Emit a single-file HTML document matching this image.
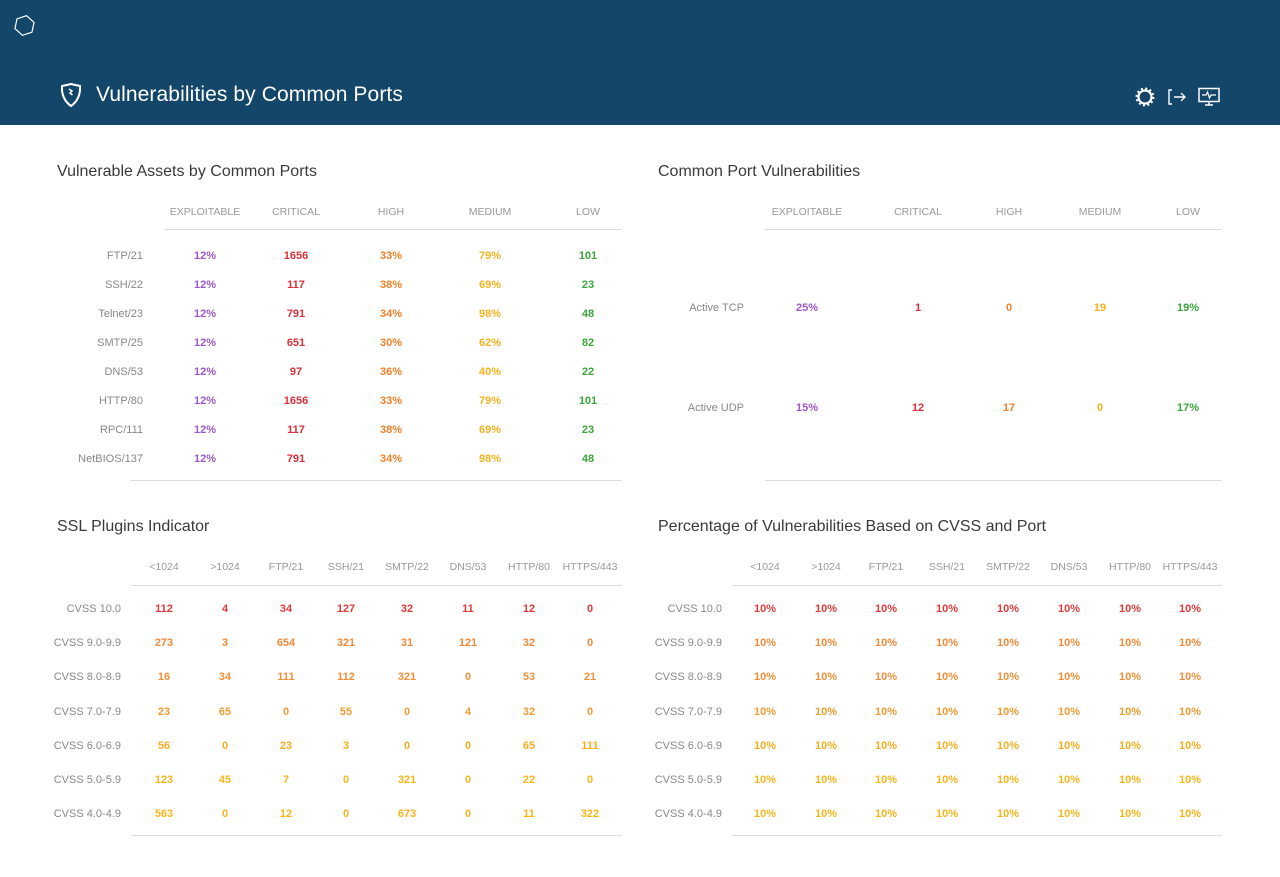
<!DOCTYPE html>
<html><head><meta charset="utf-8"><style>
*{margin:0;padding:0;box-sizing:border-box}
body{width:1280px;height:877px;background:#fff;font-family:"Liberation Sans",sans-serif;position:relative;overflow:hidden}
.hdr{position:absolute;left:0;top:0;width:1280px;height:125px;background:#134669}
.title{position:absolute;left:96px;top:83px;color:#fff;font-size:21px;letter-spacing:0.1px}
.h2{position:absolute;font-size:16px;color:#3a3a3a;font-weight:normal}
.r{position:absolute;left:0;width:1280px;height:14px;font-size:11px;line-height:14px;font-weight:bold}
.r span{position:absolute;text-align:center}
.r span:first-child{left:0;text-align:right;color:#888;font-weight:normal}
.hd span{color:#999;font-weight:normal;font-size:10.5px}
.line{position:absolute;height:1px;background:#ddd}
.t1 span{width:80px}.t1 span:first-child{width:143px}
.t1 span:nth-child(2){left:165px}.t1 span:nth-child(3){left:256px}.t1 span:nth-child(4){left:351px}.t1 span:nth-child(5){left:450px}.t1 span:nth-child(6){left:548px}
.t2 span{width:80px}.t2 span:first-child{width:744px}
.t2 span:nth-child(2){left:767px}.t2 span:nth-child(3){left:878px}.t2 span:nth-child(4){left:969px}.t2 span:nth-child(5){left:1060px}.t2 span:nth-child(6){left:1148px}
.t3 span{width:60px}.t3 span:first-child{width:121px}
.t3 span:nth-child(2){left:134px}.t3 span:nth-child(3){left:195px}.t3 span:nth-child(4){left:256px}.t3 span:nth-child(5){left:316px}.t3 span:nth-child(6){left:377px}.t3 span:nth-child(7){left:438px}.t3 span:nth-child(8){left:499px}.t3 span:nth-child(9){left:560px}
.t4 span{width:60px}.t4 span:first-child{width:722px}
.t4 span:nth-child(2){left:735px}.t4 span:nth-child(3){left:796px}.t4 span:nth-child(4){left:856px}.t4 span:nth-child(5){left:917px}.t4 span:nth-child(6){left:978px}.t4 span:nth-child(7){left:1039px}.t4 span:nth-child(8){left:1100px}.t4 span:nth-child(9){left:1160px}
.c5 span:nth-child(2){color:#9b59c6}.c5 span:nth-child(3){color:#d9303a}.c5 span:nth-child(4){color:#f0812a}.c5 span:nth-child(5){color:#f7b21e}.c5 span:nth-child(6){color:#3aa63a}
.k1{color:#df3a3a}.k2{color:#ef8a3a}.k3{color:#f0913a}.k4{color:#f39b32}.k5{color:#f8ae22}.k6{color:#f9b51c}
</style></head><body>
<div class="hdr">
<svg style="position:absolute;left:13px;top:14px" width="23" height="23" viewBox="0 0 23 23"><polygon points="11.5,1.5 20.2,6.5 20.2,16.5 11.5,21.5 2.8,16.5 2.8,6.5" transform="rotate(12 11.5 11.5)" fill="none" stroke="#fff" stroke-width="1.2"/></svg>
<svg style="position:absolute;left:59px;top:82px" width="24" height="26" viewBox="0 0 24 26"><path d="M12 2 C8 3 5 3.5 3 4 C2.5 12 5 19 12 24 C19 19 21.5 12 21 4 C19 3.5 16 3 12 2Z" fill="none" stroke="#fff" stroke-width="2"/><path d="M10 7 L13 9 L11 11 L13.5 13" fill="none" stroke="#fff" stroke-width="1.5"/></svg>
<div class="title">Vulnerabilities by Common Ports</div>
<svg style="position:absolute;left:1135px;top:87px" width="20" height="20" viewBox="0 0 20 20"><circle cx="10" cy="10" r="6.5" fill="none" stroke="#fff" stroke-width="2.2"/><circle cx="10" cy="10" r="8.5" fill="none" stroke="#fff" stroke-width="2" stroke-dasharray="2 2.45"/></svg>
<svg style="position:absolute;left:1167px;top:88px" width="20" height="18" viewBox="0 0 20 18"><path d="M5 2H2V16H5" fill="none" stroke="#fff" stroke-width="1.4"/><path d="M7 9H18M14 5L18 9L14 13" fill="none" stroke="#fff" stroke-width="1.4"/></svg>
<svg style="position:absolute;left:1197px;top:87px" width="24" height="20" viewBox="0 0 24 20"><rect x="2" y="1.5" width="20" height="13" fill="none" stroke="#fff" stroke-width="1.5"/><path d="M5 8H9L10.5 5L12.5 11L14 8H19" fill="none" stroke="#fff" stroke-width="1.2"/><path d="M8 18H16M12 14.5V18" stroke="#fff" stroke-width="1.5"/></svg>
</div>

<div class="h2" style="left:57px;top:163px">Vulnerable Assets by Common Ports</div>
<div class="h2" style="left:658px;top:163px">Common Port Vulnerabilities</div>
<div class="h2" style="left:57px;top:518px">SSL Plugins Indicator</div>
<div class="h2" style="left:658px;top:518px">Percentage of Vulnerabilities Based on CVSS and Port</div>

<div class="r t1 hd" style="top:205px"><span></span><span>EXPLOITABLE</span><span>CRITICAL</span><span>HIGH</span><span>MEDIUM</span><span>LOW</span></div>
<div class="line" style="left:165px;width:457px;top:229px"></div>
<div class="r t1 c5" style="top:249px"><span>FTP/21</span><span>12%</span><span>1656</span><span>33%</span><span>79%</span><span>101</span></div>
<div class="r t1 c5" style="top:278px"><span>SSH/22</span><span>12%</span><span>117</span><span>38%</span><span>69%</span><span>23</span></div>
<div class="r t1 c5" style="top:307px"><span>Telnet/23</span><span>12%</span><span>791</span><span>34%</span><span>98%</span><span>48</span></div>
<div class="r t1 c5" style="top:336px"><span>SMTP/25</span><span>12%</span><span>651</span><span>30%</span><span>62%</span><span>82</span></div>
<div class="r t1 c5" style="top:365px"><span>DNS/53</span><span>12%</span><span>97</span><span>36%</span><span>40%</span><span>22</span></div>
<div class="r t1 c5" style="top:394px"><span>HTTP/80</span><span>12%</span><span>1656</span><span>33%</span><span>79%</span><span>101</span></div>
<div class="r t1 c5" style="top:423px"><span>RPC/111</span><span>12%</span><span>117</span><span>38%</span><span>69%</span><span>23</span></div>
<div class="r t1 c5" style="top:452px"><span>NetBIOS/137</span><span>12%</span><span>791</span><span>34%</span><span>98%</span><span>48</span></div>
<div class="line" style="left:130px;width:492px;top:480px"></div>

<div class="r t2 hd" style="top:205px"><span></span><span>EXPLOITABLE</span><span>CRITICAL</span><span>HIGH</span><span>MEDIUM</span><span>LOW</span></div>
<div class="line" style="left:765px;width:457px;top:229px"></div>
<div class="r t2 c5" style="top:301px"><span>Active TCP</span><span>25%</span><span>1</span><span>0</span><span>19</span><span>19%</span></div>
<div class="r t2 c5" style="top:401px"><span>Active UDP</span><span>15%</span><span>12</span><span>17</span><span>0</span><span>17%</span></div>
<div class="line" style="left:765px;width:457px;top:480px"></div>

<div class="r t3 hd" style="top:560px"><span></span><span>&lt;1024</span><span>&gt;1024</span><span>FTP/21</span><span>SSH/21</span><span>SMTP/22</span><span>DNS/53</span><span>HTTP/80</span><span>HTTPS/443</span></div>
<div class="line" style="left:131px;width:491px;top:585px"></div>
<div class="r t3 k1" style="top:602px"><span>CVSS 10.0</span><span>112</span><span>4</span><span>34</span><span>127</span><span>32</span><span>11</span><span>12</span><span>0</span></div>
<div class="r t3 k2" style="top:636px"><span>CVSS 9.0-9.9</span><span>273</span><span>3</span><span>654</span><span>321</span><span>31</span><span>121</span><span>32</span><span>0</span></div>
<div class="r t3 k3" style="top:670px"><span>CVSS 8.0-8.9</span><span>16</span><span>34</span><span>111</span><span>112</span><span>321</span><span>0</span><span>53</span><span>21</span></div>
<div class="r t3 k4" style="top:705px"><span>CVSS 7.0-7.9</span><span>23</span><span>65</span><span>0</span><span>55</span><span>0</span><span>4</span><span>32</span><span>0</span></div>
<div class="r t3 k5" style="top:739px"><span>CVSS 6.0-6.9</span><span>56</span><span>0</span><span>23</span><span>3</span><span>0</span><span>0</span><span>65</span><span>111</span></div>
<div class="r t3 k6" style="top:773px"><span>CVSS 5.0-5.9</span><span>123</span><span>45</span><span>7</span><span>0</span><span>321</span><span>0</span><span>22</span><span>0</span></div>
<div class="r t3 k6" style="top:807px"><span>CVSS 4.0-4.9</span><span>563</span><span>0</span><span>12</span><span>0</span><span>673</span><span>0</span><span>11</span><span>322</span></div>
<div class="line" style="left:131px;width:491px;top:835px"></div>

<div class="r t4 hd" style="top:560px"><span></span><span>&lt;1024</span><span>&gt;1024</span><span>FTP/21</span><span>SSH/21</span><span>SMTP/22</span><span>DNS/53</span><span>HTTP/80</span><span>HTTPS/443</span></div>
<div class="line" style="left:732px;width:490px;top:585px"></div>
<div class="r t4 k1" style="top:602px"><span>CVSS 10.0</span><span>10%</span><span>10%</span><span>10%</span><span>10%</span><span>10%</span><span>10%</span><span>10%</span><span>10%</span></div>
<div class="r t4 k2" style="top:636px"><span>CVSS 9.0-9.9</span><span>10%</span><span>10%</span><span>10%</span><span>10%</span><span>10%</span><span>10%</span><span>10%</span><span>10%</span></div>
<div class="r t4 k3" style="top:670px"><span>CVSS 8.0-8.9</span><span>10%</span><span>10%</span><span>10%</span><span>10%</span><span>10%</span><span>10%</span><span>10%</span><span>10%</span></div>
<div class="r t4 k4" style="top:705px"><span>CVSS 7.0-7.9</span><span>10%</span><span>10%</span><span>10%</span><span>10%</span><span>10%</span><span>10%</span><span>10%</span><span>10%</span></div>
<div class="r t4 k5" style="top:739px"><span>CVSS 6.0-6.9</span><span>10%</span><span>10%</span><span>10%</span><span>10%</span><span>10%</span><span>10%</span><span>10%</span><span>10%</span></div>
<div class="r t4 k6" style="top:773px"><span>CVSS 5.0-5.9</span><span>10%</span><span>10%</span><span>10%</span><span>10%</span><span>10%</span><span>10%</span><span>10%</span><span>10%</span></div>
<div class="r t4 k6" style="top:807px"><span>CVSS 4.0-4.9</span><span>10%</span><span>10%</span><span>10%</span><span>10%</span><span>10%</span><span>10%</span><span>10%</span><span>10%</span></div>
<div class="line" style="left:732px;width:490px;top:835px"></div>
</body></html>
